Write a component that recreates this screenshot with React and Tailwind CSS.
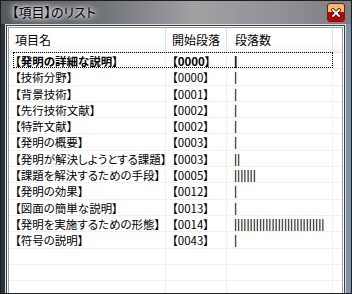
import React from 'react';

const rows = [
  { name: '【発明の詳細な説明】', start: '【0000】', count: 1, bold: true },
  { name: '【技術分野】', start: '【0000】', count: 1 },
  { name: '【背景技術】', start: '【0001】', count: 1 },
  { name: '【先行技術文献】', start: '【0002】', count: 1 },
  { name: '【特許文献】', start: '【0002】', count: 1 },
  { name: '【発明の概要】', start: '【0003】', count: 1 },
  { name: '【発明が解決しようとする課題】', start: '【0003】', count: 2 },
  { name: '【課題を解決するための手段】', start: '【0005】', count: 7 },
  { name: '【発明の効果】', start: '【0012】', count: 1 },
  { name: '【図面の簡単な説明】', start: '【0013】', count: 1 },
  { name: '【発明を実施するための形態】', start: '【0014】', count: 29 },
  { name: '【符号の説明】', start: '【0043】', count: 1 },
];

const jp = "font-['Noto_Sans_CJK_JP',sans-serif] [font-feature-settings:'palt']";

function CloseButton() {
  return (
    <div className="relative w-[18px] h-[19px] mt-[2px] rounded-[3px] border border-[#5e2418] bg-red-600 flex flex-col overflow-hidden">
      <div className="h-[8px] bg-orange-300" />
      <div className="flex-1 bg-red-700" />
      <svg className="absolute left-[3px] top-[4px]" width="10" height="10" viewBox="0 0 10 10">
        <path d="M2 2 L8 8 M8 2 L2 8" stroke="#3a1a12" strokeWidth="3.4" strokeLinecap="square" />
        <path d="M2 2 L8 8 M8 2 L2 8" stroke="#ffffff" strokeWidth="1.8" strokeLinecap="square" />
      </svg>
    </div>
  );
}

function Row({ row, focused }) {
  const b = row && row.bold ? 'font-bold' : '';
  return (
    <div className="relative flex h-[16.3px] border-b border-[#f0f0f0] text-[11.5px] leading-[16px] text-black">
      <div className={`w-[157px] shrink-0 border-r border-[#f0f0f0] pl-[6px] whitespace-nowrap overflow-hidden ${jp} ${b}`}>
        {row ? row.name : ''}
      </div>
      <div className={`w-[61px] shrink-0 border-r border-[#f0f0f0] pl-[6px] whitespace-nowrap ${jp} ${b}`}>
        {row ? row.start : ''}
      </div>
      <div className={`w-[106px] shrink-0 border-r border-[#f0f0f0] pl-[7px] whitespace-nowrap overflow-hidden text-[12px] font-['Liberation_Sans',sans-serif] ${b}`}>
        {row ? '|'.repeat(row.count) : ''}
      </div>
      <div className="flex-1" />
      {focused && (
        <div className="absolute left-[4px] top-[-1px] w-[320px] bottom-0 border border-dotted border-black" />
      )}
    </div>
  );
}

export default function App() {
  const empty = Array.from({ length: 4 });
  return (
    <div className="w-[352px] h-[294px] overflow-hidden flex flex-col bg-[linear-gradient(90deg,#2e3339_0%,#4a4f55_20%,#777a7e_50%,#8b8e92_80%,#7f91a6_100%)] border border-[#1c1f22]">
      {/* Title bar */}
      <div className="h-[23px] shrink-0 flex items-start justify-between pl-[11px] pr-[6px] bg-[linear-gradient(90deg,#54585d_0%,#6a6d71_25%,#9fa1a3_55%,#8f9194_80%,#7b7e82_100%)]">
        <span className={`mt-[3px] text-[13px] leading-[16px] text-black ${jp} [text-shadow:0_0_6px_#ffffff,0_0_10px_#ffffff,0_0_3px_#e8e8e8]`}>
          【項目】のリスト
        </span>
        <CloseButton />
      </div>

      {/* Client area */}
      <div className="flex-1 ml-[4px] mr-[5px] mb-[6px] border border-[#d9dbdd]">
        <div className="h-full border border-[#3d4146]">
          <div className="h-full border border-white">
            <div className="h-full border border-[#9a9ea3] bg-white overflow-hidden flex flex-col">
              {/* Header */}
              <div className="h-[25px] shrink-0 flex border-b border-[#e5e5e5] bg-[linear-gradient(180deg,#ffffff_0%,#ffffff_60%,#f5f6f7_100%)] text-[12px] text-black">
                <div className={`w-[157px] shrink-0 flex items-center border-r border-[#dfe0e2] pl-[6px] ${jp}`}>項目名</div>
                <div className={`w-[61px] shrink-0 flex items-center border-r border-[#dfe0e2] pl-[6px] ${jp}`}>開始段落</div>
                <div className={`w-[106px] shrink-0 flex items-center border-r border-[#dfe0e2] pl-[8px] ${jp}`}>段落数</div>
                <div className="flex-1" />
              </div>
              {/* Rows */}
              <div className="flex-1 flex flex-col">
                {rows.map((r, i) => (
                  <Row key={i} row={r} focused={i === 0} />
                ))}
                {empty.map((_, i) => (
                  <Row key={'e' + i} />
                ))}
              </div>
            </div>
          </div>
        </div>
      </div>
    </div>
  );
}
